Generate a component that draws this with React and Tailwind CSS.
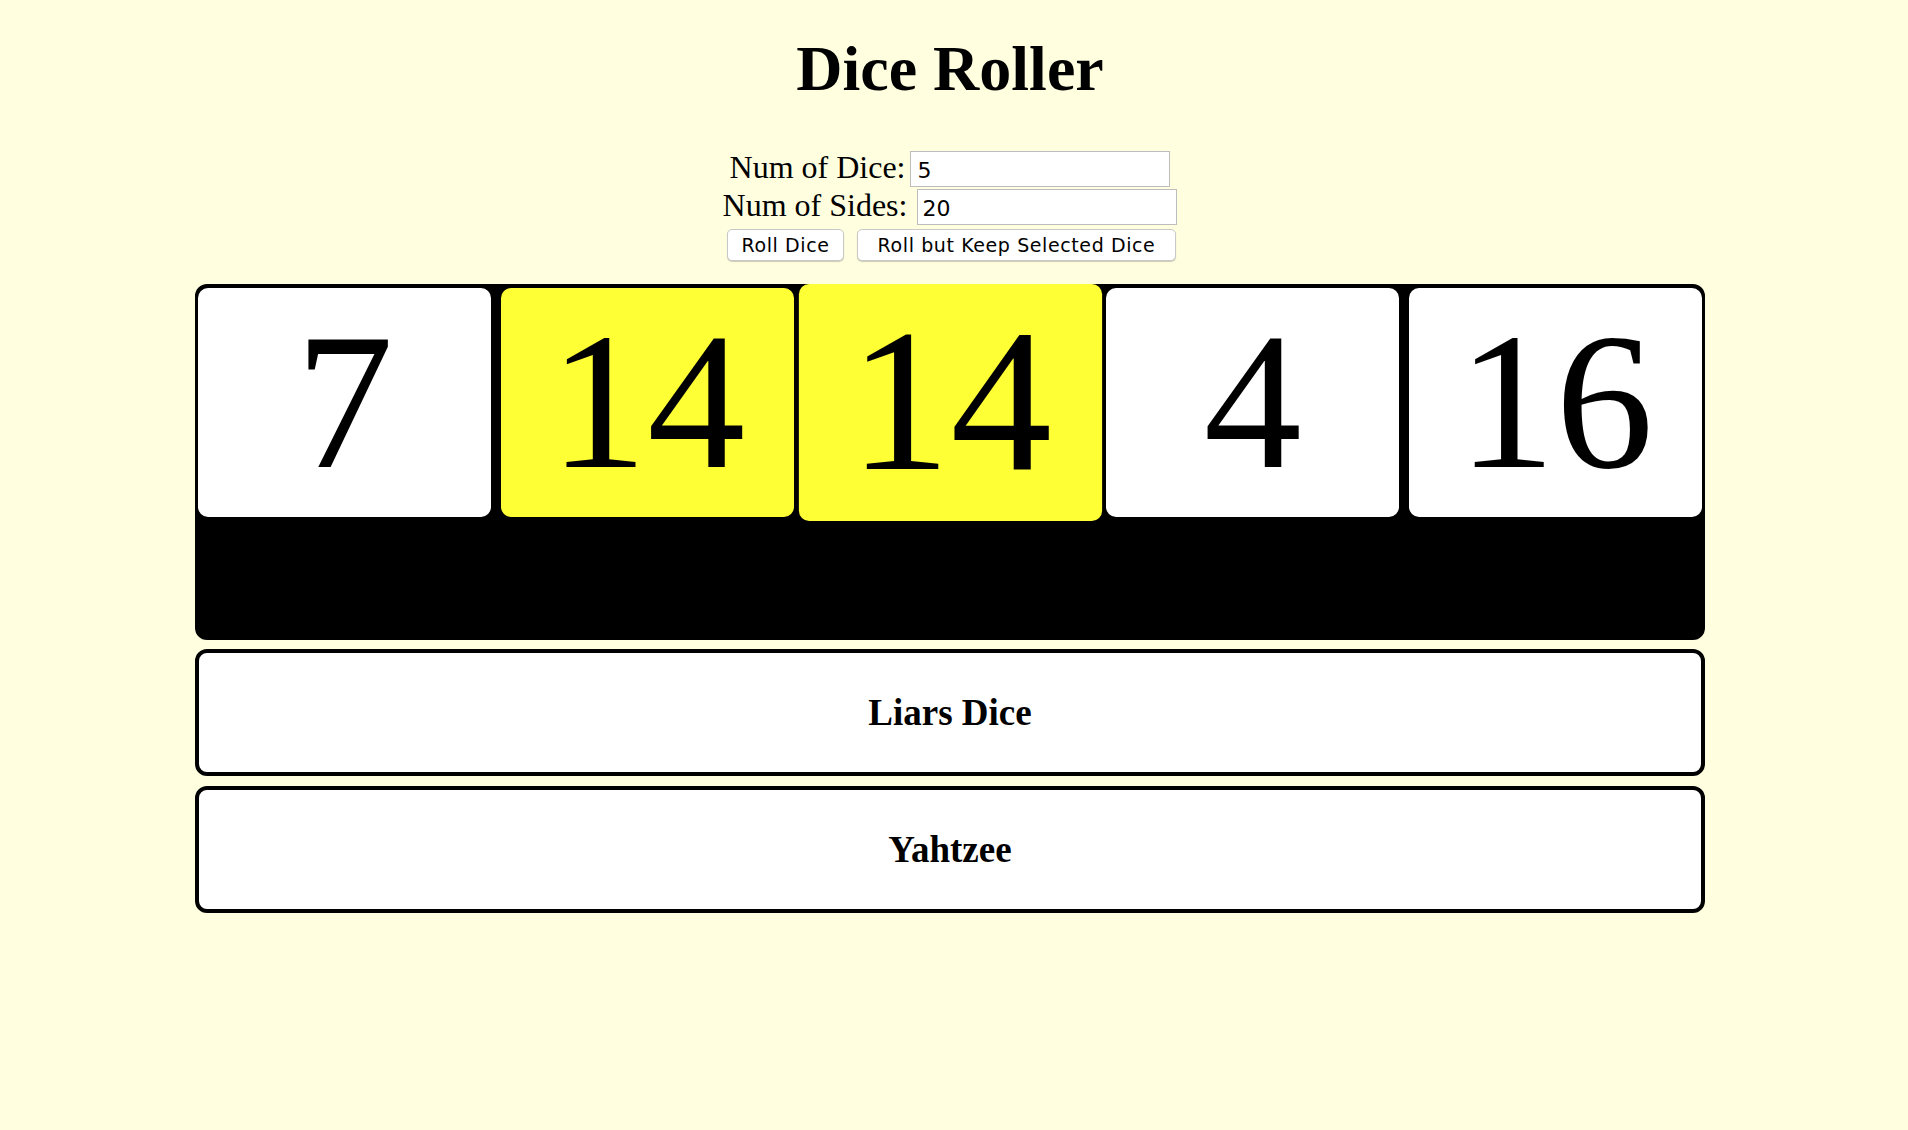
export default function App() {
  const dice = [
    { v: 7, held: false },
    { v: 14, held: true },
    { v: 14, held: true, active: true },
    { v: 4, held: false },
    { v: 16, held: false },
  ];
  return (
    <div className="min-h-screen w-full bg-[#ffffe0] font-['Liberation_Serif','Times_New_Roman',serif] text-black">
      <div className="w-[1900px] pt-[32px] pb-[40px]">
        <h1 className="text-center text-[64px] font-bold leading-[74px]">Dice Roller</h1>
        <div className="mt-[45px] flex flex-col items-center">
          <div className="flex h-[36px] items-center">
            <label className="mb-[5px] text-[32px] leading-none">Num of Dice:</label>
            <input
              defaultValue="5"
              className="ml-[5px] h-[36px] w-[260px] border border-[#bdbdbd] bg-white px-[6px] pt-[2px] font-['DejaVu_Sans',sans-serif] text-[22px] text-black outline-none"
            />
          </div>
          <div className="mt-[2px] flex h-[36px] items-center">
            <label className="mb-[5px] text-[32px] leading-none">Num of Sides:</label>
            <input
              defaultValue="20"
              className="ml-[10px] h-[36px] w-[260px] border border-[#bdbdbd] bg-white px-[4px] pt-[2px] font-['DejaVu_Sans',sans-serif] text-[22px] text-black outline-none"
            />
          </div>
          <div className="mt-[4px] flex items-center gap-[13px] pl-[3px]">
            <button className="h-[32px] w-[117px] rounded-[5px] border border-[#c8c8c8] bg-white font-['DejaVu_Sans',sans-serif] text-[19px] tracking-[0.6px] text-black shadow-[0_1px_1px_rgba(0,0,0,0.2)]">
              Roll Dice
            </button>
            <button className="h-[32px] w-[319px] rounded-[5px] border border-[#c8c8c8] bg-white font-['DejaVu_Sans',sans-serif] text-[19px] tracking-[0.6px] text-black shadow-[0_1px_1px_rgba(0,0,0,0.2)]">
              Roll but Keep Selected Dice
            </button>
          </div>
        </div>
        <div className="mx-auto mt-[23px] flex h-[356px] w-[1510px] items-start justify-between rounded-[12px] border-[3px] border-black bg-black pt-px">
          {dice.map((d, i) => (
            <div
              key={i}
              className={
                "flex h-[229px] w-[293px] items-center justify-center rounded-[10px] pb-[3px] text-[196px] leading-none " +
                (d.held ? "bg-[#ffff36] " : "bg-white ") +
                (d.active ? "scale-[1.035]" : "")
              }
            >
              {d.v}
            </div>
          ))}
        </div>
        <div className="mx-auto mt-[9px] flex h-[127px] w-[1510px] items-center justify-center rounded-[12px] border-[4px] border-black bg-white text-[37px] font-bold">
          Liars Dice
        </div>
        <div className="mx-auto mt-[10px] flex h-[127px] w-[1510px] items-center justify-center rounded-[12px] border-[4px] border-black bg-white text-[37px] font-bold">
          Yahtzee
        </div>
      </div>
    </div>
  );
}
